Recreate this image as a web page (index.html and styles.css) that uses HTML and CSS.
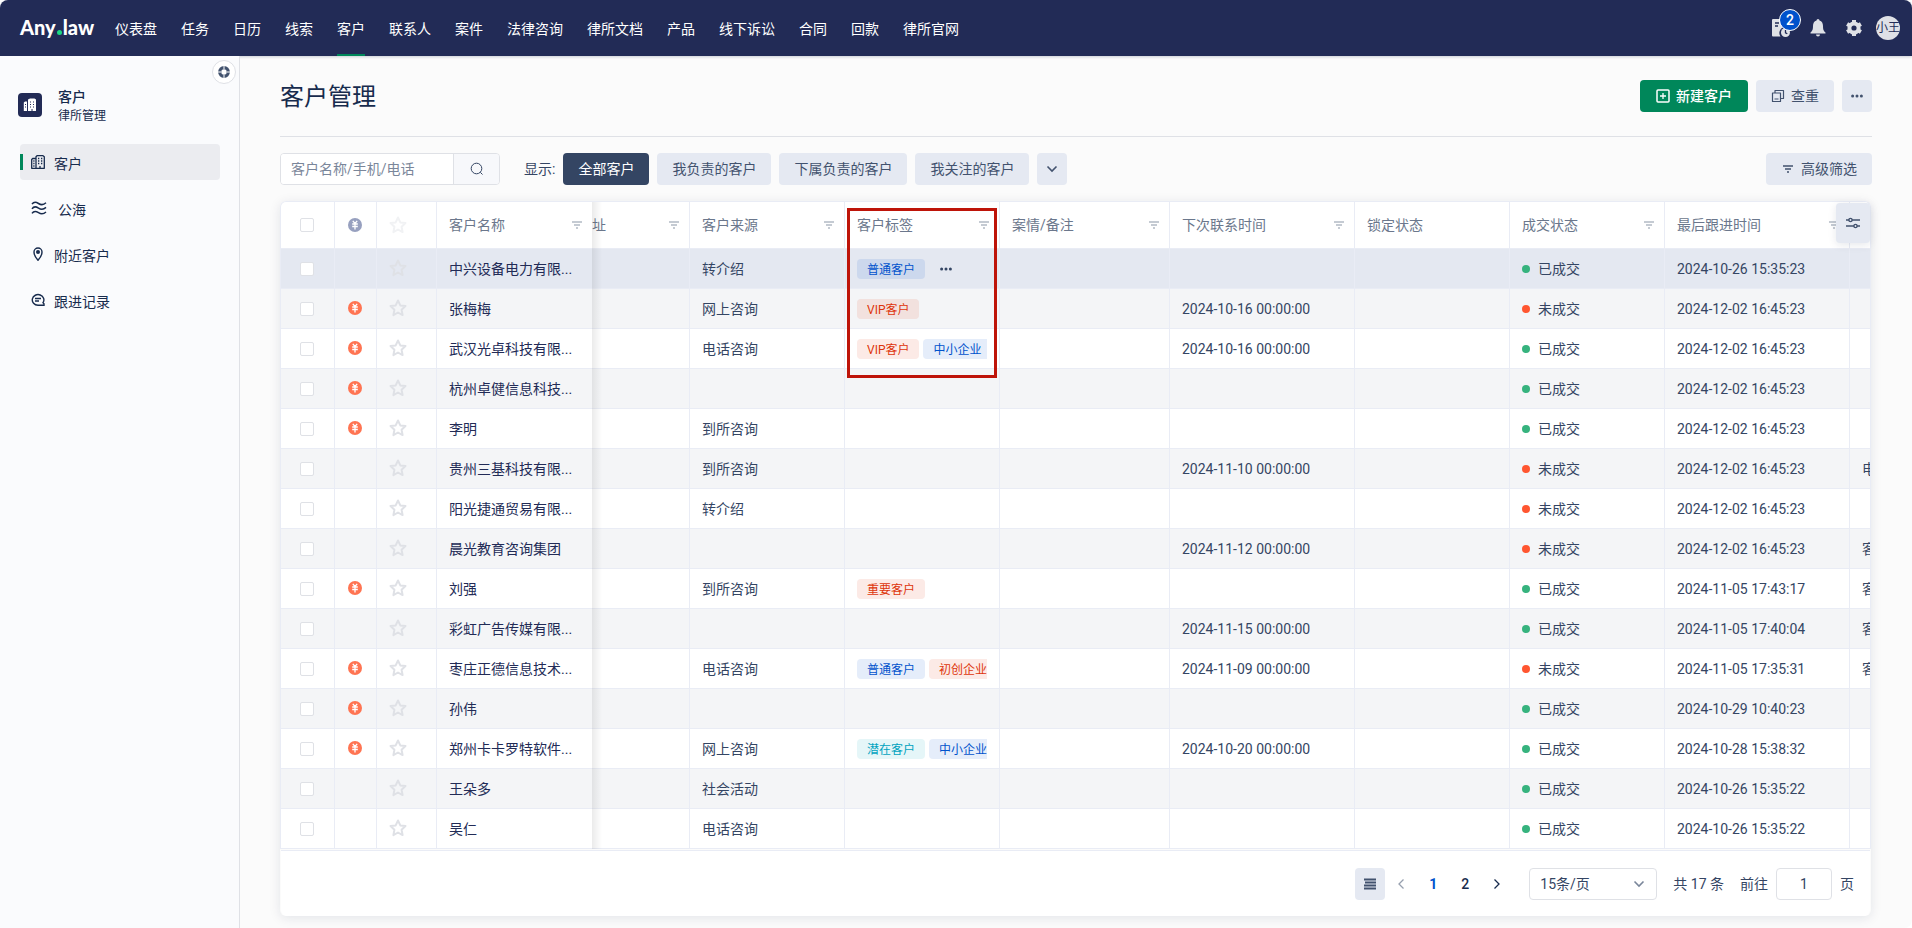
FILE: index.html
```html
<!DOCTYPE html>
<html lang="zh-CN">
<head>
    <meta charset="UTF-8">
    <meta name="viewport" content="width=device-width, initial-scale=1.0">
    <title>客户管理</title>
    <link rel="stylesheet" href="styles.css">
</head>
<body>

<svg class="sprite" aria-hidden="true">
    <symbol id="i-filter" viewBox="0 0 10 8"><path d="M0 1h10M2 4h6M4 7h2" fill="none" stroke="currentColor" stroke-width="1.400"/></symbol>
    <symbol id="i-star" viewBox="0 0 18 18"><path d="M9 1.500l2.300 4.900 5.200.6-3.900 3.700 1 5.400L9 13.500l-4.600 2.600 1-5.400L1.500 7l5.200-.6z" fill="none" stroke="currentColor" stroke-width="2" stroke-linejoin="round"/></symbol>
    <symbol id="i-coin" viewBox="0 0 14 14"><circle cx="7" cy="7" r="7" fill="currentColor"/><path d="M4.800 2.800L7 5.500l2.200-2.700M7 5v6.500M4.200 6h5.600M4.200 8.500h5.600" fill="none" stroke="#fff" stroke-width="1.300"/></symbol>
    <symbol id="i-building" viewBox="0 0 14 14"><path d="M5 13V1.700L6 .7h6l1.300 1V13.300H.7V4.500L1.700 3.500H5" fill="none" stroke="currentColor" stroke-width="1.300" stroke-linejoin="round"/><path d="M7 3.500h1.300M10 3.500h1.300M7 6h1.300M10 6h1.300M7 8.500h1.300M10 8.500h1.300M2.300 6h1.200M2.300 8.500h1.200M2.300 11h1.200M9 11v2.300" fill="none" stroke="currentColor" stroke-width="1.300"/></symbol>
    <symbol id="i-dots" viewBox="0 0 12 4"><circle cx="1.600" cy="2" r="1.500" fill="currentColor"/><circle cx="6" cy="2" r="1.500" fill="currentColor"/><circle cx="10.400" cy="2" r="1.500" fill="currentColor"/></symbol>
    <symbol id="i-down" viewBox="0 0 12 8"><path d="M1.500 1.500L6 6l4.500-4.500" fill="none" stroke="currentColor" stroke-width="1.600"/></symbol>
</svg>

<header class="topbar">
    <a href="#" class="logo">Any<i></i>law</a>
    <nav class="topnav">
        <a href="#">仪表盘</a>
        <a href="#">任务</a>
        <a href="#">日历</a>
        <a href="#">线索</a>
        <a href="#" class="active">客户</a>
        <a href="#">联系人</a>
        <a href="#">案件</a>
        <a href="#">法律咨询</a>
        <a href="#">律所文档</a>
        <a href="#">产品</a>
        <a href="#">线下诉讼</a>
        <a href="#">合同</a>
        <a href="#">回款</a>
        <a href="#">律所官网</a>
    </nav>
    <div class="tools">
        <button type="button" class="tool" aria-label="待办">
            <svg width="20" height="20" viewBox="0 0 20 20"><path d="M2 1h11a1 1 0 0 1 1 1v7a6 6 0 0 0-4.500 9.500H2a1 1 0 0 1-1-1V2a1 1 0 0 1 1-1z" fill="#dfe1e6"/><path d="M4 5h4M4 8h3" stroke="#222b56" stroke-width="1.400"/><circle cx="14.500" cy="14.500" r="4.500" fill="#dfe1e6"/><path d="M14.500 12v2.800l1.800 1" fill="none" stroke="#222b56" stroke-width="1.300"/></svg>
            <span class="badge">2</span>
        </button>
        <button type="button" class="tool" aria-label="通知">
            <svg width="18" height="18" viewBox="0 0 18 18"><path d="M9 0a1.500 1.500 0 0 1 1.500 1.500C13 2.200 14 4.500 14 7c0 4 .8 5 2.500 6.500v1H1.500v-1C3.200 12 4 11 4 7c0-2.500 1-4.800 3.500-5.500A1.500 1.500 0 0 1 9 0zM7 15.500h4a2 2 0 0 1-4 0z" fill="#dfe1e6"/></svg>
        </button>
        <button type="button" class="tool" aria-label="设置">
            <svg width="18" height="18" viewBox="0 0 18 18"><circle cx="9" cy="9" r="4.600" fill="none" stroke="#dfe1e6" stroke-width="4"/><path d="M9 1v16M2.100 5l13.800 8M2.100 13L15.900 5" stroke="#dfe1e6" stroke-width="4" stroke-dasharray="3 10"/></svg>
        </button>
        <button type="button" class="avatar">小王</button>
    </div>
</header>

<div class="layout">
    <aside class="sidebar">
        <button type="button" class="collapse" aria-label="收起">
            <svg width="14" height="14" viewBox="0 0 14 14"><circle cx="7" cy="7" r="4.300" fill="none" stroke="#42526e" stroke-width="3.200"/><path d="M7 0v4M7 10v4M0 7h4M10 7h4" stroke="#fff" stroke-width="1"/></svg>
        </button>
        <div class="module">
            <span class="module-icon">
                <svg width="14" height="14" viewBox="0 0 14 14"><path d="M5 1.500L7 .5h4.500l1.500 1V13H5zM.8 4.500L2 3.500h2V13H.8z" fill="#fff"/><path d="M7 4h1M10 4h1M7 6.500h1M10 6.500h1M7 9h1M10 9h1M2 6.500h1M2 9h1M9 11v2" stroke="#222b56" stroke-width="1"/></svg>
            </span>
            <div>
                <strong>客户</strong>
                <small>律所管理</small>
            </div>
        </div>
        <nav class="menu">
            <a href="#" class="active"><svg width="14" height="14"><use href="#i-building"/></svg><span>客户</span></a>
            <a href="#" class="wide"><svg width="16" height="14" viewBox="0 0 16 14"><path d="M1 3.200c2-3 4.500-2 6.500-.7s4.500 2 7.500-.7M1 7.800c2-3 4.500-2 6.500-.7s4.500 2 7.500-.7M1 12.400c2-3 4.500-2 6.500-.7s4.500 2 7.500-.7" fill="none" stroke="currentColor" stroke-width="1.500"/></svg><span>公海</span></a>
            <a href="#"><svg width="14" height="14" viewBox="0 0 14 14"><path d="M7 13.300C4.500 10.500 3 8 3 5a4 4 0 0 1 8 0c0 3-1.500 5.500-4 8.300z" fill="none" stroke="currentColor" stroke-width="1.400"/><circle cx="7" cy="5" r="2" fill="currentColor"/></svg><span>附近客户</span></a>
            <a href="#"><svg width="14" height="14" viewBox="0 0 14 14"><path d="M12 9.700A5.800 5.300 0 1 0 7 12.200h6v-1.400z" fill="none" stroke="currentColor" stroke-width="1.400"/><path d="M4 5.500h6M4 8h4" stroke="currentColor" stroke-width="1.300"/></svg><span>跟进记录</span></a>
        </nav>
    </aside>

    <main class="main">
        <div class="page-head">
            <h1>客户管理</h1>
            <div class="actions">
                <button type="button" class="btn btn-green"><svg width="14" height="14" viewBox="0 0 14 14"><rect x="1" y="1" width="12" height="12" rx="1" fill="none" stroke="currentColor" stroke-width="1.500"/><path d="M7 4v6M4 7h6" stroke="currentColor" stroke-width="1.300"/></svg>新建客户</button>
                <button type="button" class="btn"><svg width="14" height="14" viewBox="0 0 14 14"><path d="M1.500 4h8v8.500h-8zM4 3.500V1.500h8.500v8H10M3.500 10h4" fill="none" stroke="currentColor" stroke-width="1.200" stroke-linejoin="round"/></svg>查重</button>
                <button type="button" class="btn btn-icon" aria-label="更多"><svg width="12" height="4"><use href="#i-dots"/></svg></button>
            </div>
        </div>

        <div class="filters">
            <form class="search">
                <input type="text" aria-label="搜索客户" placeholder="客户名称/手机/电话">
                <button type="submit" aria-label="搜索"><svg width="14" height="14" viewBox="0 0 14 14"><circle cx="6.500" cy="6.500" r="5.300" fill="none" stroke="currentColor"/><path d="M10.300 10.300l2.200 2.200" stroke="currentColor"/></svg></button>
            </form>
            <span class="show">显示:</span>
            <div class="tabs">
                <button type="button" class="btn btn-dark">全部客户</button>
                <button type="button" class="btn">我负责的客户</button>
                <button type="button" class="btn">下属负责的客户</button>
                <button type="button" class="btn">我关注的客户</button>
                <button type="button" class="btn btn-icon" aria-label="展开"><svg width="12" height="8"><use href="#i-down"/></svg></button>
            </div>
            <button type="button" class="btn advanced"><svg width="10" height="8"><use href="#i-filter"/></svg>高级筛选</button>
        </div>

        <div class="card">
            <button type="button" class="columns-btn" aria-label="列设置"><svg width="14" height="12" viewBox="0 0 14 12"><path d="M0 3h3M6 3h8M0 9h8M11 9h3" stroke="currentColor" stroke-width="1.500"/><circle cx="4.500" cy="3" r="1.600" fill="none" stroke="currentColor" stroke-width="1.400"/><circle cx="9.500" cy="9" r="1.600" fill="none" stroke="currentColor" stroke-width="1.400"/></svg></button>
            <div class="table-wrap">
                <table>
                    <colgroup>
                        <col class="w-check"><col class="w-coin"><col class="w-star"><col class="w-name"><col class="w-addr"><col class="w-mid"><col class="w-mid"><col class="w-note"><col class="w-time"><col class="w-mid"><col class="w-mid"><col class="w-time"><col>
                    </colgroup>
                    <thead>
                        <tr>
                            <th class="center"><input type="checkbox" aria-label="全选"></th>
                            <th class="center coin"><svg width="14" height="14"><use href="#i-coin"/></svg></th>
                            <th class="star"><svg width="18" height="18"><use href="#i-star"/></svg></th>
                            <th class="name"><div class="th">客户名称<svg width="10" height="8"><use href="#i-filter"/></svg></div></th>
                            <th class="addr"><div class="th">址<svg width="10" height="8"><use href="#i-filter"/></svg></div></th>
                            <th><div class="th">客户来源<svg width="10" height="8"><use href="#i-filter"/></svg></div></th>
                            <th class="marked"><div class="th">客户标签<svg width="10" height="8"><use href="#i-filter"/></svg></div></th>
                            <th><div class="th">案情/备注<svg width="10" height="8"><use href="#i-filter"/></svg></div></th>
                            <th><div class="th">下次联系时间<svg width="10" height="8"><use href="#i-filter"/></svg></div></th>
                            <th><div class="th">锁定状态</div></th>
                            <th><div class="th">成交状态<svg width="10" height="8"><use href="#i-filter"/></svg></div></th>
                            <th><div class="th">最后跟进时间<svg width="10" height="8"><use href="#i-filter"/></svg></div></th>
                            <th class="last">客</th>
                        </tr>
                    </thead>
                    <tbody id="rows"></tbody>
                </table>
            </div>
            <div class="pager">
                <button type="button" class="btn btn-icon" aria-label="列表"><svg width="12" height="12" viewBox="0 0 12 12"><path d="M0 1.500h12M1 4.500h11M0 7.500h12M0 10.500h12" stroke="currentColor" stroke-width="2"/></svg></button>
                <div class="pages">
                    <button type="button" class="prev" aria-label="上一页"><svg width="8" height="12" viewBox="0 0 8 12"><path d="M6.500 1.500L2 6l4.500 4.500" fill="none" stroke="currentColor" stroke-width="1.300"/></svg></button>
                    <button type="button" class="current">1</button>
                    <button type="button">2</button>
                    <button type="button" aria-label="下一页"><svg width="8" height="12" viewBox="0 0 8 12"><path d="M1.500 1.500L6 6l-4.500 4.500" fill="none" stroke="currentColor" stroke-width="1.300"/></svg></button>
                </div>
                <div class="size">
                    <select aria-label="每页条数"><option>15条/页</option></select>
                    <svg width="12" height="8"><use href="#i-down"/></svg>
                </div>
                <span class="total">共 17 条</span>
                <label for="goto">前往</label>
                <input type="text" id="goto" value="1">
                <span>页</span>
            </div>
        </div>
    </main>
</div>

<script src="script.js"></script>
</body>
</html>
```

FILE: styles.css
```css
*, *::before, *::after {
    box-sizing: border-box;
}

html {
    background: #fff;
}

body {
    margin: 0;
    min-height: 100vh;
    display: flex;
    flex-direction: column;
    overflow-x: hidden;
    font-family: Roboto, "Noto Sans CJK SC", sans-serif;
    font-size: 14px;
    line-height: 20px;
    color: #344563;
}

a {
    color: inherit;
    text-decoration: none;
}

button, input, select {
    font: inherit;
    color: inherit;
}

button {
    padding: 0;
    border: none;
    background: none;
    cursor: pointer;
}

svg {
    display: block;
    flex: none;
}

.sprite {
    position: absolute;
    width: 0;
    height: 0;
}

/* top bar */
.topbar {
    display: flex;
    align-items: center;
    height: 56px;
    padding: 0 12px 0 20px;
    background: #222b56;
    color: #fff;
    border-radius: 8px 8px 0 0;
    box-shadow: 0 1px 3px rgba(9, 30, 66, 0.2);
    position: relative;
}

.logo {
    width: 95px;
    padding-bottom: 2px;
    font-family: Lato, sans-serif;
    font-size: 20px;
    font-weight: 900;
}

.logo i {
    display: inline-block;
    width: 5px;
    height: 5px;
    margin: 0 1px;
    border-radius: 50%;
    background: #1dd882;
}

.topnav {
    display: flex;
    gap: 24px;
}

.topnav a {
    height: 56px;
    line-height: 58px;
    white-space: nowrap;
}

.topnav .active {
    border-bottom: 2px solid #00875a;
}

.tools {
    display: flex;
    align-items: center;
    gap: 18px;
    margin-left: auto;
}

.tool {
    position: relative;
}

.badge {
    position: absolute;
    top: -9px;
    left: 8px;
    width: 22px;
    height: 22px;
    border: 1px solid #fff;
    border-radius: 50%;
    background: #0052cc;
    color: #fff;
    font-weight: 500;
}

.avatar {
    width: 24px;
    height: 24px;
    margin-left: -5px;
    border-radius: 50%;
    background: #dfe1e6;
    color: #222b56;
    font-size: 12px;
    line-height: 24px;
    white-space: nowrap;
}

.layout {
    flex: 1;
    display: flex;
}

/* sidebar */
.sidebar {
    position: relative;
    flex: none;
    width: 240px;
    padding: 32px 19px 0 20px;
    background: #fafbfd;
    border-right: 1px solid #dfe1e6;
}

.collapse {
    position: absolute;
    top: 4px;
    right: 3px;
    display: flex;
    align-items: center;
    justify-content: center;
    width: 24px;
    height: 24px;
    border: 1px solid #dfe1e6;
    border-radius: 50%;
    background: #fff;
}

.module {
    display: flex;
    align-items: center;
    gap: 16px;
    margin-bottom: 18px;
    color: #172b4d;
}

.module-icon {
    display: flex;
    align-items: center;
    justify-content: center;
    width: 24px;
    height: 24px;
    margin: 0 0 4px -2px;
    border-radius: 4px;
    background: #222b56;
}

.module strong, .module small {
    display: block;
}

.module strong {
    line-height: 18px;
    font-weight: 500;
}

.module small {
    font-size: 12px;
    line-height: 20px;
}

.menu {
    display: flex;
    flex-direction: column;
    gap: 10px;
}

.menu a {
    display: flex;
    align-items: center;
    gap: 9px;
    height: 36px;
    padding-left: 11px;
    border-radius: 4px;
    color: #172b4d;
}

.menu span {
    padding-top: 3px;
}

.menu .wide {
    gap: 11px;
}

.menu .active {
    position: relative;
    background: #ebecf0;
}

.menu .active::before {
    content: "";
    position: absolute;
    left: 0;
    top: 10px;
    width: 3px;
    height: 16px;
    background: #00875a;
}

/* content */
.main {
    flex: 1;
    min-width: 0;
    padding: 24px 40px 12px;
    background: #fbfbfb;
    border-radius: 0 0 8px 0;
}

.page-head {
    display: flex;
    justify-content: space-between;
    height: 57px;
    margin-bottom: 16px;
    border-bottom: 1px solid #dfe1e6;
}

h1 {
    margin: 0;
    font-size: 24px;
    font-weight: 400;
    line-height: 35px;
    color: #172b4d;
}

.actions, .tabs {
    display: flex;
    gap: 8px;
}

.btn {
    display: flex;
    align-items: center;
    justify-content: center;
    gap: 6px;
    height: 32px;
    padding: 0 15px;
    border-radius: 4px;
    background: #e5e9f2;
    color: #42526e;
    white-space: nowrap;
}

.btn-icon {
    width: 30px;
    padding: 0;
}

.btn-green {
    padding: 0 16px;
    background: #00875a;
    color: #fff;
    font-weight: 500;
}

.btn-dark {
    background: #344563;
    color: #fff;
}

.filters {
    display: flex;
    align-items: center;
    margin-bottom: 16px;
}

.search {
    display: flex;
    width: 220px;
    height: 32px;
    border: 1px solid #dfe1e6;
    border-radius: 4px;
    overflow: hidden;
}

.search input {
    flex: 1;
    min-width: 0;
    padding: 0 10px;
    border: none;
    background: #fff;
}

.search input::placeholder {
    color: #7a869a;
}

.search button {
    display: flex;
    align-items: center;
    justify-content: center;
    width: 46px;
    border-left: 1px solid #dfe1e6;
    background: #f7f8fb;
}

.show {
    margin: 0 8px 0 24px;
}

.advanced {
    gap: 8px;
    margin-left: auto;
    padding: 0 15px 0 17px;
}

.card {
    position: relative;
    margin-right: 1px;
    border-radius: 6px;
    box-shadow: 0 2px 12px rgba(9, 30, 66, 0.1);
}

.columns-btn {
    position: absolute;
    top: 2px;
    right: 1px;
    z-index: 3;
    display: flex;
    align-items: center;
    justify-content: center;
    width: 34px;
    height: 40px;
    border-radius: 4px;
    background: #e5e9f2;
    color: #42526e;
    box-shadow: 0 2px 8px rgba(9, 30, 66, 0.1);
}

.table-wrap {
    border: 1px solid #e9ecf5;
    border-bottom: none;
    border-radius: 6px 6px 0 0;
    overflow: hidden;
    background: #fff;
}

/* table */
table {
    width: 100%;
    table-layout: fixed;
    border-collapse: separate;
    border-spacing: 0;
}

.w-check { width: 54px; }
.w-coin { width: 42px; }
.w-star { width: 60px; }
.w-name { width: 155px; }
.w-addr { width: 98px; }
.w-mid { width: 155px; }
.w-note { width: 170px; }
.w-time { width: 185px; }

th, td {
    height: 40px;
    padding: 0 12px;
    border-right: 1px solid #e9ecf5;
    border-bottom: 1px solid #e9ecf5;
    text-align: left;
    font-weight: 400;
    white-space: nowrap;
}

th {
    height: 47px;
    padding-right: 10px;
    color: #6b778c;
}

.th {
    display: flex;
    align-items: center;
    justify-content: space-between;
}

.th svg {
    color: #b3bac5;
}

tbody tr:nth-child(even) {
    background: #f4f5f7;
}

tbody tr.hover {
    background: #e4e8f1;
}

.center {
    padding: 0 1px 0 0;
}

.center svg, .center input {
    margin: 0 auto;
}

input[type="checkbox"] {
    display: block;
    appearance: none;
    width: 14px;
    height: 14px;
    border: 1px solid #dfe1e6;
    border-radius: 2px;
    background: #fff;
}

.star {
    color: #dfe1e6;
}

td.star, td.coin {
    padding-bottom: 2px;
}

th.star {
    color: #f1f2f4;
}

th.coin {
    color: #97a0bf;
}

td.coin {
    color: #ff7452;
}

/* right edge of the frozen columns */
.name {
    position: relative;
    border-right: none;
}

.name::after {
    content: "";
    position: absolute;
    top: 0;
    bottom: -1px;
    left: 100%;
    width: 10px;
    background: linear-gradient(to right, rgba(0, 0, 0, 0.08), rgba(0, 0, 0, 0));
}

td.name {
    color: #222b56;
}

th.addr {
    padding-left: 0;
}

.last {
    padding-right: 0;
    border-right: none;
    overflow: hidden;
}

.marked {
    position: relative;
}

.marked::after {
    content: "";
    position: absolute;
    top: 6px;
    left: 2px;
    right: 2px;
    height: 170px;
    border: 3px solid #be1409;
}

.tags {
    display: flex;
    align-items: center;
    gap: 4px;
    overflow: hidden;
}

.tag {
    flex: none;
    height: 20px;
    padding: 0 10px;
    border-radius: 4px;
    font-size: 12px;
    line-height: 22px;
}

.tag.blue {
    background: rgba(0, 82, 204, 0.1);
    color: #0052cc;
}

.tag.red {
    background: rgba(222, 53, 11, 0.1);
    color: #de350b;
}

.tag.cyan {
    background: rgba(0, 163, 191, 0.1);
    color: #00a3bf;
}

.tags button {
    margin-left: 11px;
}

.status {
    display: flex;
    align-items: center;
    gap: 8px;
}

.status::before {
    content: "";
    width: 8px;
    height: 8px;
    border-radius: 50%;
    background: #36b37e;
}

.status.open::before {
    background: #ff5630;
}

/* pager */
.pager {
    display: flex;
    align-items: center;
    justify-content: flex-end;
    height: 66px;
    margin: 1px 1px 0;
    padding-right: 16px;
    border-top: 1px solid #e9ecf5;
    border-radius: 0 0 6px 6px;
    background: #fff;
}

.pages {
    display: flex;
    margin-right: 16px;
}

.pages button {
    display: flex;
    align-items: center;
    justify-content: center;
    width: 32px;
    height: 32px;
    color: #172b4d;
    font-weight: 500;
}

.pages .prev {
    color: #97a0af;
}

.pages .current {
    color: #0052cc;
    font-weight: 700;
}

.size {
    position: relative;
}

.size select {
    display: block;
    appearance: none;
    width: 128px;
    height: 32px;
    padding: 0 10px;
    border: 1px solid #dfe1e6;
    border-radius: 4px;
    background: #fff;
}

.size svg {
    position: absolute;
    top: 12px;
    right: 12px;
    color: #7a869a;
    pointer-events: none;
}

.total {
    margin: 0 16px;
}

.pager input {
    width: 56px;
    height: 32px;
    margin: 0 8px;
    border: 1px solid #dfe1e6;
    border-radius: 4px;
    text-align: center;
}
```

FILE: script.js
```js
const customers = [
    { name: "中兴设备电力有限...", source: "转介绍", tags: ["普通客户"], done: true, last: "2024-10-26 15:35:23", hover: true },
    { coin: true, name: "张梅梅", source: "网上咨询", tags: ["VIP客户"], next: "2024-10-16 00:00:00", last: "2024-12-02 16:45:23" },
    { coin: true, name: "武汉光卓科技有限...", source: "电话咨询", tags: ["VIP客户", "中小企业"], next: "2024-10-16 00:00:00", done: true, last: "2024-12-02 16:45:23" },
    { coin: true, name: "杭州卓健信息科技...", done: true, last: "2024-12-02 16:45:23" },
    { coin: true, name: "李明", source: "到所咨询", done: true, last: "2024-12-02 16:45:23" },
    { name: "贵州三基科技有限...", source: "到所咨询", next: "2024-11-10 00:00:00", last: "2024-12-02 16:45:23", extra: "电" },
    { name: "阳光捷通贸易有限...", source: "转介绍", last: "2024-12-02 16:45:23" },
    { name: "晨光教育咨询集团", next: "2024-11-12 00:00:00", last: "2024-12-02 16:45:23", extra: "客" },
    { coin: true, name: "刘强", source: "到所咨询", tags: ["重要客户"], done: true, last: "2024-11-05 17:43:17", extra: "客" },
    { name: "彩虹广告传媒有限...", next: "2024-11-15 00:00:00", done: true, last: "2024-11-05 17:40:04", extra: "客" },
    { coin: true, name: "枣庄正德信息技术...", source: "电话咨询", tags: ["普通客户", "初创企业"], next: "2024-11-09 00:00:00", last: "2024-11-05 17:35:31", extra: "客" },
    { coin: true, name: "孙伟", done: true, last: "2024-10-29 10:40:23" },
    { coin: true, name: "郑州卡卡罗特软件...", source: "网上咨询", tags: ["潜在客户", "中小企业"], next: "2024-10-20 00:00:00", done: true, last: "2024-10-28 15:38:32" },
    { name: "王朵多", source: "社会活动", done: true, last: "2024-10-26 15:35:22" },
    { name: "吴仁", source: "电话咨询", done: true, last: "2024-10-26 15:35:22" }
];

const tagColors = {
    "普通客户": "blue",
    "中小企业": "blue",
    "VIP客户": "red",
    "重要客户": "red",
    "初创企业": "red",
    "潜在客户": "cyan"
};

const icon = (id, w, h) => `<svg width="${w}" height="${h}"><use href="#i-${id}"/></svg>`;

document.getElementById("rows").innerHTML = customers.map(c => {
    const tags = (c.tags || []).map(t => `<span class="tag ${tagColors[t]}">${t}</span>`).join("");
    const more = c.hover ? `<button type="button" aria-label="更多">${icon("dots", 12, 4)}</button>` : "";

    return `<tr class="${c.hover ? "hover" : ""}">
        <td class="center"><input type="checkbox" aria-label="选择"></td>
        <td class="center coin">${c.coin ? icon("coin", 14, 14) : ""}</td>
        <td class="star">${icon("star", 18, 18)}</td>
        <td class="name">${c.name}</td>
        <td></td>
        <td>${c.source || ""}</td>
        <td><div class="tags">${tags}${more}</div></td>
        <td></td>
        <td>${c.next || ""}</td>
        <td></td>
        <td><div class="status ${c.done ? "" : "open"}">${c.done ? "已成交" : "未成交"}</div></td>
        <td>${c.last}</td>
        <td class="last">${c.extra || ""}</td>
    </tr>`;
}).join("");
```
